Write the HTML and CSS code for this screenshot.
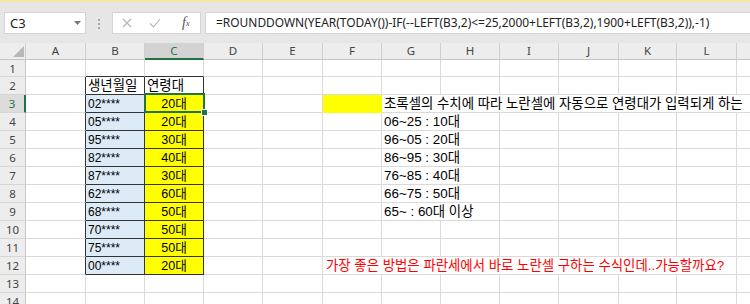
FILE: index.html
```html
<!DOCTYPE html>
<html lang="ko">
<head>
  <meta charset="UTF-8" />
  <title>연령대 수식</title>
  <link rel="stylesheet" href="styles.css">
</head>
<body>
  <div class="toolbar">
    <div class="namebox">
      <span>C3</span>
      <svg width="7" height="4" viewBox="0 0 7 4"><path d="M0 0h7L3.5 4z" fill="#777"/></svg>
    </div>
    <div class="grip"><i></i><i></i><i></i></div>
    <div class="fxbox">
      <span class="btn"><svg width="10" height="10" viewBox="0 0 10 10"><path d="M1 1l8 8M9 1l-8 8" stroke="#b3b3b3" stroke-width="1.1"/></svg></span>
      <span class="btn"><svg width="12" height="10" viewBox="0 0 12 10"><path d="M1 5.5l3.5 3.5L11 1" stroke="#b3b3b3" stroke-width="1.1" fill="none"/></svg></span>
      <span class="btn fx">f<sub>x</sub></span>
    </div>
    <div class="formula">=ROUNDDOWN(YEAR(TODAY())-IF(--LEFT(B3,2)&lt;=25,2000+LEFT(B3,2),1900+LEFT(B3,2)),-1)</div>
  </div>

  <div class="sheet">
    <!-- column headers -->
    <div class="corner"><svg width="26" height="17" viewBox="0 0 26 17"><path d="M24 3v11H13z" fill="#b8b8b8"/></svg></div>
    <div class="ch">A</div><div class="ch">B</div><div class="ch on">C</div><div class="ch">D</div>
    <div class="ch">E</div><div class="ch">F</div><div class="ch">G</div><div class="ch">H</div>
    <div class="ch">I</div><div class="ch">J</div><div class="ch">K</div><div class="ch">L</div><div class="ch"></div>

    <!-- 1 -->
    <div class="rh">1</div><div class="c"></div><div class="c tb"></div><div class="c tb"></div>
    <div class="c"></div><div class="c"></div><div class="c"></div><div class="c"></div><div class="c"></div>
    <div class="c"></div><div class="c"></div><div class="c"></div><div class="c"></div><div class="c"></div>

    <!-- 2 -->
    <div class="rh">2</div><div class="c lb"></div><div class="c bx">생년월일</div><div class="c bx">연령대</div>
    <div class="c"></div><div class="c"></div><div class="c"></div><div class="c"></div><div class="c"></div>
    <div class="c"></div><div class="c"></div><div class="c"></div><div class="c"></div><div class="c"></div>

    <!-- 3 -->
    <div class="rh on">3</div><div class="c lb"></div><div class="c bx blu">02****</div>
    <div class="c bx yel mid cur">20대<span class="sel"><b class="handle"></b></span></div>
    <div class="c"></div><div class="c"></div><div class="c fill"></div>
    <div class="c span7">초록셀의 수치에 따라 노란셀에 자동으로 연령대가 입력되게 하는</div>

    <!-- 4 -->
    <div class="rh">4</div><div class="c lb"></div><div class="c bx blu">05****</div><div class="c bx yel mid">20대</div>
    <div class="c"></div><div class="c"></div><div class="c"></div><div class="c span2">06~25 : 10대</div>
    <div class="c"></div><div class="c"></div><div class="c"></div><div class="c"></div><div class="c"></div>

    <!-- 5 -->
    <div class="rh">5</div><div class="c lb"></div><div class="c bx blu">95****</div><div class="c bx yel mid">30대</div>
    <div class="c"></div><div class="c"></div><div class="c"></div><div class="c span2">96~05 : 20대</div>
    <div class="c"></div><div class="c"></div><div class="c"></div><div class="c"></div><div class="c"></div>

    <!-- 6 -->
    <div class="rh">6</div><div class="c lb"></div><div class="c bx blu">82****</div><div class="c bx yel mid">40대</div>
    <div class="c"></div><div class="c"></div><div class="c"></div><div class="c span2">86~95 : 30대</div>
    <div class="c"></div><div class="c"></div><div class="c"></div><div class="c"></div><div class="c"></div>

    <!-- 7 -->
    <div class="rh">7</div><div class="c lb"></div><div class="c bx blu">87****</div><div class="c bx yel mid">30대</div>
    <div class="c"></div><div class="c"></div><div class="c"></div><div class="c span2">76~85 : 40대</div>
    <div class="c"></div><div class="c"></div><div class="c"></div><div class="c"></div><div class="c"></div>

    <!-- 8 -->
    <div class="rh">8</div><div class="c lb"></div><div class="c bx blu">62****</div><div class="c bx yel mid">60대</div>
    <div class="c"></div><div class="c"></div><div class="c"></div><div class="c span2">66~75 : 50대</div>
    <div class="c"></div><div class="c"></div><div class="c"></div><div class="c"></div><div class="c"></div>

    <!-- 9 -->
    <div class="rh">9</div><div class="c lb"></div><div class="c bx blu">68****</div><div class="c bx yel mid">50대</div>
    <div class="c"></div><div class="c"></div><div class="c"></div><div class="c span2">65~ : 60대 이상</div>
    <div class="c"></div><div class="c"></div><div class="c"></div><div class="c"></div><div class="c"></div>

    <!-- 10 -->
    <div class="rh">10</div><div class="c lb"></div><div class="c bx blu">70****</div><div class="c bx yel mid">50대</div>
    <div class="c"></div><div class="c"></div><div class="c"></div><div class="c"></div><div class="c"></div>
    <div class="c"></div><div class="c"></div><div class="c"></div><div class="c"></div><div class="c"></div>

    <!-- 11 -->
    <div class="rh">11</div><div class="c lb"></div><div class="c bx blu">75****</div><div class="c bx yel mid">50대</div>
    <div class="c"></div><div class="c"></div><div class="c"></div><div class="c"></div><div class="c"></div>
    <div class="c"></div><div class="c"></div><div class="c"></div><div class="c"></div><div class="c"></div>

    <!-- 12 -->
    <div class="rh">12</div><div class="c lb"></div><div class="c bx blu">00****</div><div class="c bx yel mid">20대</div>
    <div class="c"></div><div class="c"></div>
    <div class="c span7 red">가장 좋은 방법은 파란세에서 바로 노란셀 구하는 수식인데..가능할까요?</div>
    <div class="c"></div>

    <!-- 13 -->
    <div class="rh">13</div><div class="c"></div><div class="c"></div><div class="c"></div>
    <div class="c"></div><div class="c"></div><div class="c"></div><div class="c"></div><div class="c"></div>
    <div class="c"></div><div class="c"></div><div class="c"></div><div class="c"></div><div class="c"></div>

    <!-- 14 -->
    <div class="rh">14</div><div class="c"></div><div class="c"></div><div class="c"></div>
    <div class="c"></div><div class="c"></div><div class="c"></div><div class="c"></div><div class="c"></div>
    <div class="c"></div><div class="c"></div><div class="c"></div><div class="c"></div><div class="c"></div>
  </div>
</body>
</html>
```

FILE: styles.css
```css
body {
  margin: 0;
  width: 750px;
  height: 304px;
  overflow: hidden;
  background: #fff;
  font-family: "Liberation Sans", "Noto Sans CJK KR", sans-serif;
  color: #000;
}

/* formula bar */
.toolbar {
  box-sizing: border-box;
  height: 43px;
  border-top: 2px solid #f3e7a3;
  background: #e6e6e6;
  display: flex;
  align-items: flex-start;
  padding: 10px 0 0 4px;
  font-family: "Noto Sans", sans-serif;
}
.namebox {
  box-sizing: border-box;
  width: 82px;
  height: 22px;
  background: #fff;
  border: 1px solid #d4d4d4;
  display: flex;
  align-items: center;
  justify-content: space-between;
  padding: 0 4px 0 5px;
  font-size: 13px;
  color: #222;
}
.grip {
  width: 26px;
  display: flex;
  flex-direction: column;
  align-items: center;
  gap: 2px;
  padding-top: 7px;
}
.grip i {
  width: 2px;
  height: 2px;
  background: #a6a6a6;
}
.fxbox {
  box-sizing: border-box;
  width: 89px;
  height: 22px;
  background: #fff;
  border: 1px solid #d4d4d4;
  display: flex;
  align-items: center;
}
.btn {
  width: 29px;
  display: flex;
  justify-content: center;
  align-items: center;
  height: 20px;
}
.fx {
  font-family: "Liberation Serif", serif;
  font-style: italic;
  font-size: 14px;
  color: #555;
  padding-left: 2px;
}
.fx sub {
  font-size: 9px;
  vertical-align: -1px;
}
.formula {
  box-sizing: border-box;
  flex: 1;
  margin-left: 4px;
  height: 22px;
  background: #fff;
  border: 1px solid #d4d4d4;
  border-right: none;
  padding-left: 10px;
  font-size: 11.95px;
  line-height: 20px;
  color: #222;
  white-space: nowrap;
  overflow: hidden;
}

/* sheet */
.sheet {
  display: grid;
  grid-template-columns: 26px 60px 59px 59px 59px 60px 59px 59px 59px 59px 60px 58px 60px 59px;
  grid-template-rows: 17px 17px repeat(13, 18px);
  width: 796px;
}
.corner,
.ch,
.rh {
  box-sizing: border-box;
  background: #ededed;
  color: #444;
  font-family: "Noto Sans", sans-serif;
  font-size: 11.5px;
  text-align: center;
}
.corner {
  border-right: 1px solid #d0d0d0;
  border-bottom: 1px solid #c6c6c6;
}
.corner svg {
  display: block;
}
.ch {
  border-right: 1px solid #d0d0d0;
  border-bottom: 1px solid #c6c6c6;
  line-height: 16px;
}
.ch.on {
  background: #d3d3d3;
  color: #217346;
  border-bottom: 2px solid #217346;
}
.rh {
  border-right: 1px solid #c6c6c6;
  border-bottom: 1px solid #d6d6d6;
  line-height: 17px;
}
.rh.on {
  background: #dcdcdc;
  color: #217346;
  border-right: 2px solid #217346;
}

.c {
  box-sizing: border-box;
  border-right: 1px solid #dadada;
  border-bottom: 1px solid #dadada;
  padding-left: 2px;
  font-size: 13.4px;
  line-height: 18px;
  white-space: nowrap;
}
.tb {
  border-bottom-color: #333;
}
.lb {
  border-right-color: #333;
}
.bx {
  border-right-color: #333;
  border-bottom-color: #333;
}
.blu {
  background: #ddebf7;
  font-size: 12px;
}
.yel {
  background: #ffff00;
  font-size: 12.6px;
}
.mid {
  text-align: center;
  padding-left: 0;
}
.fill {
  background: #ffff00;
  border-color: #ffff00;
}
.span7 {
  grid-column: span 7;
}
.span2 {
  grid-column: span 2;
}
.red {
  color: #ff0000;
  padding-left: 3px;
}

/* active cell */
.cur {
  position: relative;
}
.sel {
  position: absolute;
  top: -2px;
  left: -1px;
  right: -2px;
  bottom: -1px;
  border: 2px solid #217346;
}
.handle {
  position: absolute;
  right: -5px;
  bottom: -5px;
  width: 5px;
  height: 5px;
  background: #217346;
  border: 1px solid #fff;
}
```
